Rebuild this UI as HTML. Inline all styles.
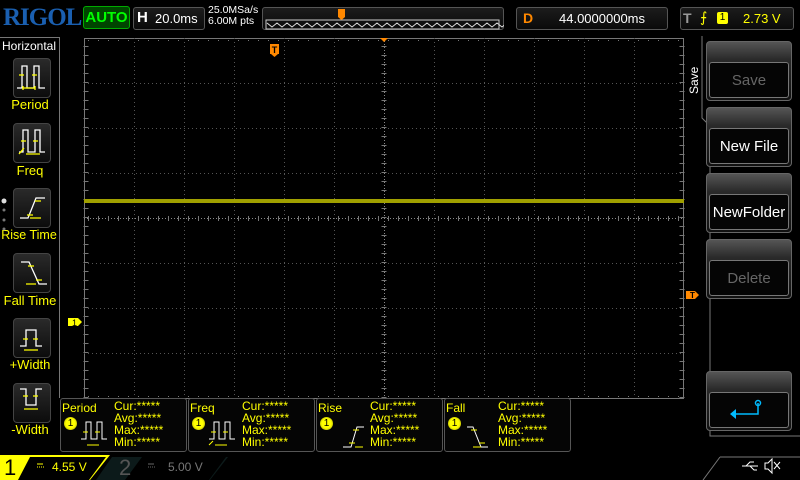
<!DOCTYPE html>
<html><head><meta charset="utf-8"><style>
*{margin:0;padding:0;box-sizing:border-box}
body{width:800px;height:480px;background:#000;overflow:hidden;position:relative;font-family:"Liberation Sans",sans-serif;color:#fff}
.a{position:absolute}
.box{position:absolute;border:1px solid #555;border-radius:3px;background:linear-gradient(#1c1c1c,#0a0a0a)}
.lbtn{position:absolute;left:13px;width:38px;height:40px;border:1px solid #444;border-radius:4px;background:linear-gradient(#2a2a2a,#0c0c0c)}
.llab{position:absolute;left:0;width:60px;text-align:center;color:#ff0;font-size:13px}
.rbtn{position:absolute;left:706px;width:86px;height:60px;border:1px solid #666;border-radius:4px;background:linear-gradient(#555 0,#2a2a2a 30%,#111 100%)}
.rin{position:absolute;left:2px;right:2px;top:20px;bottom:2px;border:1px solid #777;border-radius:3px;background:#050505;display:flex;align-items:center;justify-content:center;font-size:15px}
.meas{position:absolute;top:398px;width:127px;height:54px;border:1px solid #555;border-radius:3px;background:#050505;color:#ff0;font-size:12px}
.meas .t{position:absolute;left:1px;top:2px}
.meas .v{position:absolute;left:53px;top:1px;line-height:12px}
.meas .c{position:absolute;left:3px;top:18px;width:13px;height:13px;border-radius:50%;background:radial-gradient(#ff0 50%,#880 100%);color:#000;font-size:10px;text-align:center;line-height:13px}
</style></head><body>
<div class="a" style="left:3px;top:4px;font-family:'Liberation Serif',serif;font-weight:bold;font-size:25px;color:#1a5fb0;letter-spacing:-1px">RIGOL</div>
<div class="a" style="left:83px;top:6px;width:47px;height:23px;border:1px solid #0a0;border-radius:3px;background:#040;color:#0f0;font-weight:bold;font-size:15px;text-align:center;line-height:21px">AUTO</div>
<div class="box" style="left:133px;top:7px;width:72px;height:23px"></div>
<div class="a" style="left:137px;top:9px;font-weight:bold;font-size:15px">H</div>
<div class="a" style="left:155px;top:11px;font-size:13px">20.0ms</div>
<div class="a" style="left:208px;top:5px;font-size:10.5px;line-height:11px">25.0MSa/s<br>6.00M pts</div>
<div class="box" style="left:262px;top:7px;width:242px;height:23px"></div>
<svg class="a" style="left:264px;top:9px" width="240" height="22"><rect x="2" y="11" width="233" height="9" fill="none" stroke="#ccc"/><path d="M3 14l5 4 5-4 5 4 5-4 5 4 5-4 5 4 5-4 5 4 5-4 5 4 5-4 5 4 5-4 5 4 5-4 5 4 5-4 5 4 5-4 5 4 5-4 5 4 5-4 5 4 5-4 5 4 5-4 5 4 5-4 5 4 5-4 5 4 5-4 5 4 5-4 5 4 5-4 5 4 5-4 5 4 5-4 5 4 5-4 5 4 5-4 5 4 5-4 5 4 5-4 5 4" fill="none" stroke="#ddd"/><rect x="74" y="0" width="7" height="8" fill="#f80"/><path d="M74 8l3.5 3 3.5-3z" fill="#f80"/></svg>
<div class="box" style="left:516px;top:7px;width:152px;height:23px"></div>
<div class="a" style="left:523px;top:10px;color:#f80;font-weight:bold;font-size:14px">D</div>
<div class="a" style="left:559px;top:11px;font-size:13px">44.0000000ms</div>
<div class="box" style="left:680px;top:7px;width:114px;height:23px"></div>
<div class="a" style="left:683px;top:10px;color:#999;font-weight:bold;font-size:14px">T</div>
<div class="a" style="left:700px;top:9px;color:#ff0;font-size:14px">⨍</div>
<div class="a" style="left:717px;top:12px;width:11px;height:12px;background:#ff0;color:#000;font-size:10px;text-align:center;line-height:12px;border-radius:2px">1</div>
<div class="a" style="left:743px;top:11px;color:#ff0;font-size:13px">2.73 V</div>
<div class="a" style="left:0;top:37px;width:60px;height:361px;border-right:1px solid #777;border-top:1px solid #777"></div>
<div class="a" style="left:2px;top:39px;font-size:12px">Horizontal</div>
<div class="lbtn" style="top:58px"></div><div class="llab" style="top:97px">Period</div>
<div class="lbtn" style="top:123px"></div><div class="llab" style="top:163px">Freq</div>
<div class="lbtn" style="top:188px"></div><div class="llab" style="top:228px;font-size:12.5px;left:-1px">Rise Time</div>
<div class="lbtn" style="top:253px"></div><div class="llab" style="top:293px">Fall Time</div>
<div class="lbtn" style="top:318px"></div><div class="llab" style="top:357px">+Width</div>
<div class="lbtn" style="top:383px"></div><div class="llab" style="top:422px">-Width</div>
<svg class="a" style="left:0;top:0" width="60" height="480" fill="none" stroke-width="1.3">
<path d="M17 88h5V66h5v22h7V66h5v22h6" stroke="#fff"/><path d="M19 75h5M32 75h5M23 88h12M23 86v4M35 86v4" stroke="#ff0"/>
<path d="M19 152h4V130h5v22h7V130h5v22h5" stroke="#fff"/><path d="M21 141h5M33 141h5M26 154h14M19 154l5-6" stroke="#ff0"/>
<path d="M20 218h8l8-20h9" stroke="#fff"/><path d="M35 201h6M27 215h6M30 218h11" stroke="#ff0"/>
<path d="M21 262h8l10 22h8" stroke="#fff"/><path d="M28 266h6M36 280h6M26 284h10" stroke="#ff0"/>
<path d="M20 346h6v-16h10v16h6" stroke="#fff"/><path d="M23 339h5M33 339h5M24 350h14" stroke="#ff0"/>
<path d="M20 389h6v16h10v-16h6" stroke="#fff"/><path d="M23 396h5M33 396h5M24 409h14" stroke="#ff0"/>
<circle cx="4" cy="201" r="2.5" fill="#ddd" stroke="none"/><circle cx="4" cy="210" r="1.5" fill="#777" stroke="none"/><circle cx="4" cy="220" r="1.5" fill="#777" stroke="none"/><circle cx="4" cy="229" r="1.5" fill="#777" stroke="none"/>
</svg>
<svg class="a" style="left:0;top:0" width="800" height="480">
<g stroke="#777"><path d="M84.5 38v360M683.5 38v360M84 398.5h600M84 38.5h600"/></g>
<g stroke="#555" stroke-dasharray="1 3">
<path d="M134.5 38v360M184.5 38v360M234.5 38v360M284.5 38v360M334.5 38v360M434.5 38v360M484.5 38v360M534.5 38v360M584.5 38v360M634.5 38v360"/>
<path d="M84 83.5h600M84 128.5h600M84 173.5h600M84 263.5h600M84 308.5h600M84 353.5h600"/>
</g>
<g stroke="#888" stroke-dasharray="1 2"><path d="M384.5 38v360M84 218.5h600"/></g>
<g stroke="#777" stroke-dasharray="1 9" stroke-dashoffset="-4"><path d="M84 40.5h600M84 396.5h600"/><path d="M84 218.5h600" stroke-width="5"/></g>
<g stroke="#777" stroke-dasharray="1 8" stroke-dashoffset="-8"><path d="M86 38v360M682 38v360M384 38v360" stroke-width="5"/></g>
<rect x="84" y="199" width="600" height="4" fill="#a0a000"/>
<path d="M380 38h8l-4 4z" fill="#f80"/>
<rect x="270" y="44" width="9" height="10" fill="#f80"/><path d="M271 54l3.5 3 3.5-3z" fill="#f80"/><text x="274.5" y="53" font-size="9" font-weight="bold" fill="#000" text-anchor="middle" font-family="Liberation Sans">T</text>
<path d="M686 291h9l4 4-4 4h-9z" fill="#f80"/><text x="690" y="298" font-size="8" font-weight="bold" fill="#000" font-family="Liberation Sans">T</text>
<path d="M68 318h10l4 4-4 4h-10z" fill="#ff0"/><text x="72" y="326" font-size="9" fill="#000" font-family="Liberation Sans">1</text>
</svg>
<svg class="a" style="left:686px;top:36px" width="114" height="406"><path d="M16 0v82l8 8v310h98" fill="none" stroke="#777"/></svg>
<div class="a" style="left:687px;font-size:12px;transform:rotate(-90deg);transform-origin:left top;top:94px">Save</div>
<div class="rbtn" style="top:41px"><div class="rin" style="color:#666">Save</div></div>
<div class="rbtn" style="top:107px"><div class="rin">New File</div></div>
<div class="rbtn" style="top:173px"><div class="rin">NewFolder</div></div>
<div class="rbtn" style="top:239px"><div class="rin" style="color:#666">Delete</div></div>
<div class="rbtn" style="top:371px"><div class="rin"><svg width="50" height="30"><path d="M34 8v11H10" fill="none" stroke="#0bf" stroke-width="1.5"/><circle cx="34" cy="8" r="2.5" fill="none" stroke="#0bf" stroke-width="1.5"/><path d="M6 19l6-5v10z" fill="#0bf"/></svg></div></div>
<div class="meas" style="left:60px"><div class="t">Period</div><div class="c">1</div><div class="v">Cur:*****<br>Avg:*****<br>Max:*****<br>Min:*****</div>
<svg class="a" style="left:18px;top:18px" width="30" height="34" fill="none"><path d="M2 22h5V5h5v17h6V5h5v17h5" stroke="#fff"/><path d="M4 15h5M16 15h5M8 28h12" stroke="#ff0"/></svg></div>
<div class="meas" style="left:188px"><div class="t">Freq</div><div class="c">1</div><div class="v">Cur:*****<br>Avg:*****<br>Max:*****<br>Min:*****</div>
<svg class="a" style="left:18px;top:18px" width="30" height="34" fill="none"><path d="M2 22h5V5h5v17h6V5h5v17h5" stroke="#fff"/><path d="M4 15h5M16 15h5M8 28h12M2 28l4-4" stroke="#ff0"/></svg></div>
<div class="meas" style="left:316px"><div class="t">Rise</div><div class="c">1</div><div class="v">Cur:*****<br>Avg:*****<br>Max:*****<br>Min:*****</div>
<svg class="a" style="left:18px;top:18px" width="34" height="34" fill="none"><path d="M8 30h8l6-20h7" stroke="#fff"/><path d="M18 13h6M14 26h6M20 30h8" stroke="#ff0"/></svg></div>
<div class="meas" style="left:444px"><div class="t">Fall</div><div class="c">1</div><div class="v">Cur:*****<br>Avg:*****<br>Max:*****<br>Min:*****</div>
<svg class="a" style="left:18px;top:18px" width="34" height="34" fill="none"><path d="M4 10h6l8 20h7" stroke="#fff"/><path d="M8 13h6M16 26h6M10 30h8" stroke="#ff0"/></svg></div>
<svg class="a" style="left:0;top:454px" width="800" height="26">
<path d="M0 1h110l-20 25H0z" fill="#ff0"/><path d="M30 3h76l-17 23H18z" fill="#000"/>
<path d="M112 3h116l-18 23H96z" fill="#0c1a1a"/><path d="M142 3h84l-17 23H125z" fill="#000"/>
<path d="M720 3h80M720 3l-17 23" stroke="#777" fill="none"/>
<path d="M37 10h6M37 13h1M39 13h1M41 13h1M43 13h1" stroke="#ff0"/>
<path d="M148 10h6M148 13h1M150 13h1M152 13h1M154 13h1" stroke="#666"/>
<path d="M742 12h16M746 12l4-4h4M750 12l4 4h3" stroke="#fff" fill="none"/>
<path d="M765 9h3l4-4v14l-4-4h-3z" stroke="#fff" fill="none"/><path d="M774 8l6 7M780 8l-6 7" stroke="#fff"/>
</svg>
<div class="a" style="left:4px;top:456px;color:#000;font-size:22px;line-height:24px">1</div>
<div class="a" style="left:52px;top:460px;color:#ff0;font-size:12px">4.55 V</div>
<div class="a" style="left:119px;top:456px;color:#555;font-size:22px;line-height:24px">2</div>
<div class="a" style="left:168px;top:460px;color:#777;font-size:12px">5.00 V</div>
</body></html>
